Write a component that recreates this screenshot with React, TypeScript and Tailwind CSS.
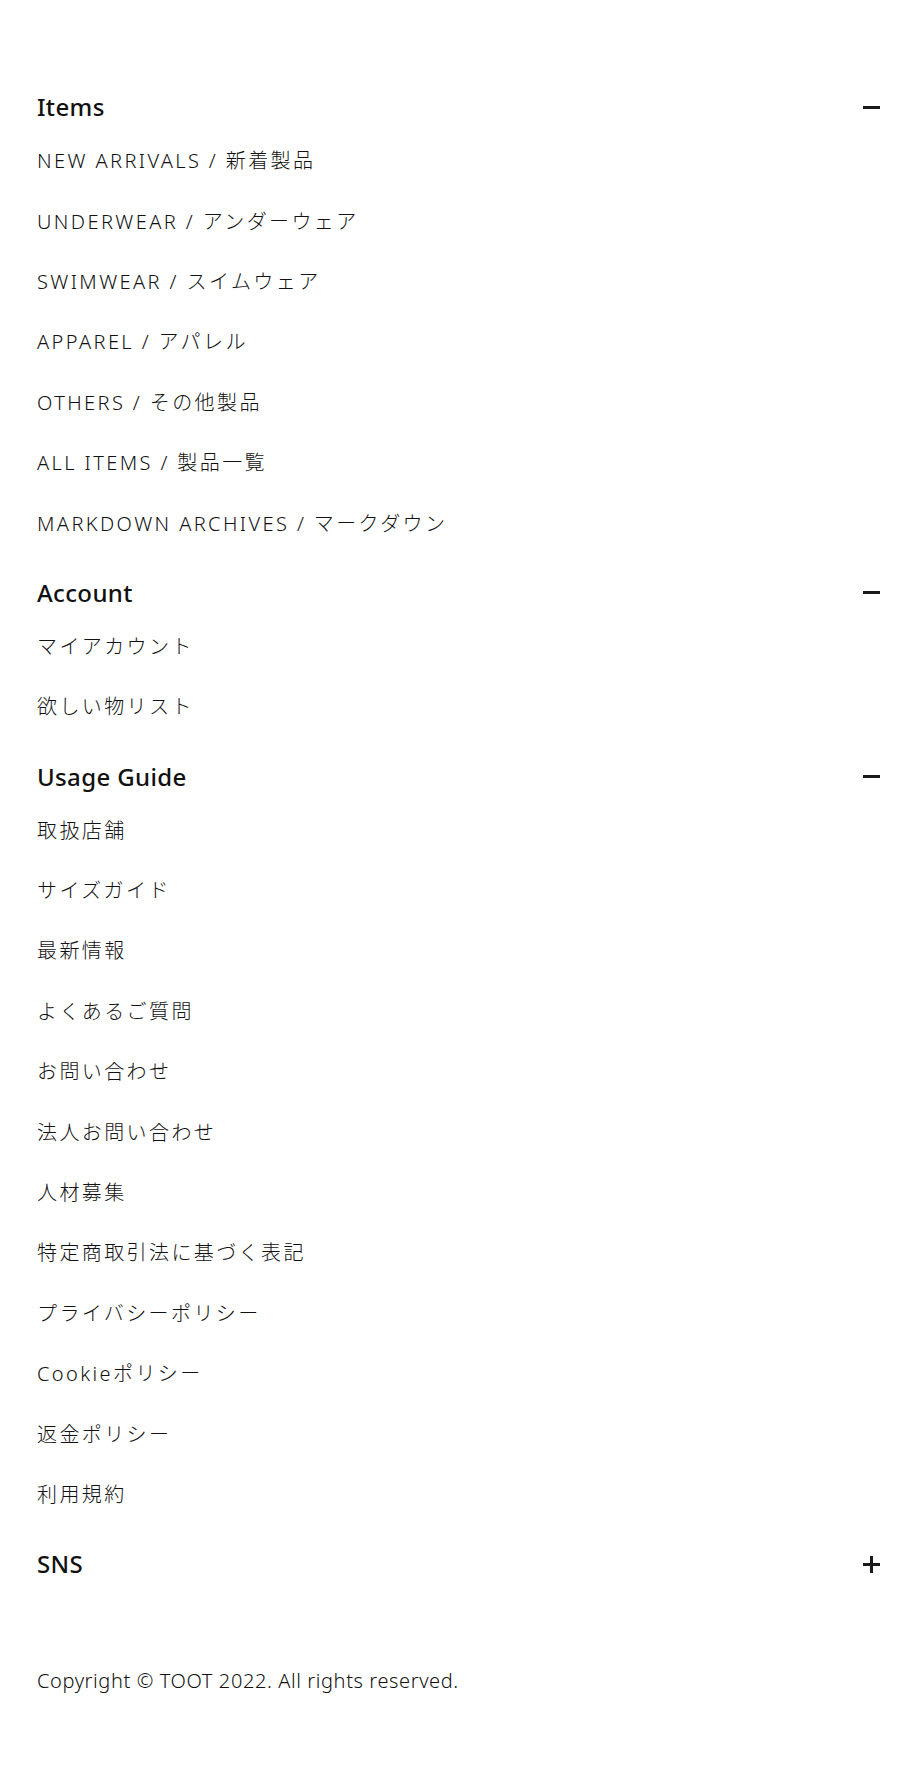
import { useState } from "react";

type Section = { title: string; links: string[] };

const sections: Section[] = [
  {
    title: "Items",
    links: [
      "NEW ARRIVALS / 新着製品",
      "UNDERWEAR / アンダーウェア",
      "SWIMWEAR / スイムウェア",
      "APPAREL / アパレル",
      "OTHERS / その他製品",
      "ALL ITEMS / 製品一覧",
      "MARKDOWN ARCHIVES / マークダウン",
    ],
  },
  { title: "Account", links: ["マイアカウント", "欲しい物リスト"] },
  {
    title: "Usage Guide",
    links: [
      "取扱店舗",
      "サイズガイド",
      "最新情報",
      "よくあるご質問",
      "お問い合わせ",
      "法人お問い合わせ",
      "人材募集",
      "特定商取引法に基づく表記",
      "プライバシーポリシー",
      "Cookieポリシー",
      "返金ポリシー",
      "利用規約",
    ],
  },
  { title: "SNS", links: [] },
];

function Toggle({ open }: { open: boolean }) {
  return (
    <span className="relative block w-[17px] h-[17px] shrink-0">
      <span className="absolute left-0 top-[7px] w-[17px] h-[3px] bg-[#1a1a1a]" />
      {!open && <span className="absolute top-0 left-[7px] w-[3px] h-[17px] bg-[#1a1a1a]" />}
    </span>
  );
}

export default function App() {
  const [open, setOpen] = useState<Record<string, boolean>>({
    Items: true,
    Account: true,
    "Usage Guide": true,
    SNS: false,
  });

  return (
    <div
      className="min-h-[1770px] bg-white text-[#111111] px-[37px] pt-[83px] pb-[76px]"
      style={{ fontFamily: '"Noto Sans", "Noto Sans CJK JP", sans-serif' }}
    >
      <nav className="flex flex-col gap-[15px]">
        {sections.map(s => (
          <div key={s.title}>
            <button
              onClick={() => setOpen(p => ({ ...p, [s.title]: !p[s.title] }))}
              className="w-full h-[48px] flex items-center justify-between"
            >
              <span className="text-[24px] font-medium tracking-[0.015em] leading-none">{s.title}</span>
              <span className="mr-[-1px]"><Toggle open={open[s.title]} /></span>
            </button>
            {open[s.title] && s.links.length > 0 && (
              <ul>
                {s.links.map(l => (
                  <li key={l} className="h-[60.4px] flex items-center">
                    <a href="#" className="text-[20px] font-light tracking-[0.12em] leading-none">{l}</a>
                  </li>
                ))}
              </ul>
            )}
          </div>
        ))}
      </nav>

      <p className="mt-[81px] text-[20px] font-light tracking-[0.03em] leading-[24px]">
        Copyright © TOOT 2022. All rights reserved.
      </p>
    </div>
  );
}
